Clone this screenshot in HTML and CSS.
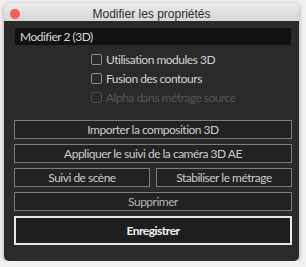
FILE: index.html
```html
<!DOCTYPE html>
<html lang="fr">
<head>
  <meta charset="UTF-8">
  <meta name="viewport" content="width=device-width, initial-scale=1.0">
  <title>Modifier les propriétés</title>
  <link rel="stylesheet" href="styles.css">
</head>
<body>
  <div class="window">
    <div class="title-bar">
      <span class="close-dot"></span>
      <span class="title">Modifier les propriétés</span>
    </div>
    <div class="panel">
      <div class="name-field">Modifier 2 (3D)</div>

      <div class="options">
        <label class="option"><span class="box"></span>Utilisation modules 3D</label>
        <label class="option"><span class="box"></span>Fusion des contours</label>
        <label class="option disabled"><span class="box"></span>Alpha dans métrage source</label>
      </div>

      <div class="actions">
        <button class="btn">Importer la composition 3D</button>
        <button class="btn">Appliquer le suivi de la caméra 3D AE</button>
        <div class="btn-row">
          <button class="btn">Suivi de scène</button>
          <button class="btn">Stabiliser le métrage</button>
        </div>
        <button class="btn dim">Supprimer</button>
        <button class="btn save">Enregistrer</button>
      </div>
    </div>
  </div>
</body>
</html>
```

FILE: styles.css
```css
body {
  margin: 0;
  background: #f1f1f1;
  font-family: "Lato", "Open Sans", sans-serif;
}
.window {
  margin: 3px 7px 0 4px;
  width: 295px;
  height: 258px;
  border-radius: 5px;
  overflow: hidden;
  box-shadow: 0 1px 4px rgba(0, 0, 0, 0.35);
  display: flex;
  flex-direction: column;
}
.title-bar {
  position: relative;
  height: 18px;
  background: linear-gradient(#ececec, #d6d6d6);
  display: flex;
  align-items: center;
  justify-content: center;
}
.close-dot {
  position: absolute;
  left: 6px;
  top: 6px;
  width: 10px;
  height: 10px;
  border-radius: 50%;
  background: #fb5d58;
}
.title {
  font-family: "Liberation Sans", sans-serif;
  font-size: 12px;
  color: #2c2c2c;
  margin-top: 3px;
}
.panel {
  flex: 1;
  background: #2a2a2a;
  padding: 7px 7px 0 10px;
}
.name-field {
  height: 17px;
  margin: 0 1px;
  background: #121212;
  color: #d6d6d6;
  font-size: 12px;
  letter-spacing: -0.5px;
  line-height: 17px;
  padding-left: 5px;
}
.options {
  display: flex;
  flex-direction: column;
  padding: 8px 0 0 77px;
  gap: 6px;
}
.option {
  display: flex;
  align-items: center;
  gap: 4px;
  height: 13px;
  font-size: 12px;
  letter-spacing: -0.5px;
  color: #d2d2d2;
}
.box {
  width: 9px;
  height: 9px;
  border: 1.5px solid #8e8e8e;
  border-radius: 2px;
}
.option.disabled {
  color: #575757;
}
.option.disabled .box {
  border-color: #4a4a4a;
}
.actions {
  display: flex;
  flex-direction: column;
  gap: 5px;
  margin-top: 16px;
}
.btn-row {
  display: flex;
  gap: 6px;
}
.btn-row .btn {
  flex: 1;
}
.btn {
  height: 19px;
  padding: 0;
  background: #222;
  border: 1.5px solid #7c7c7c;
  color: #cccccc;
  font-family: "Lato", "Open Sans", sans-serif;
  font-size: 12px;
  letter-spacing: -0.5px;
}
.btn.dim {
  color: #b4b4b4;
}
.btn.save {
  height: 29px;
  border: 2px solid #e6e6e6;
  background: #1e1e1e;
  color: #f4f4f4;
  font-size: 12px;
  font-weight: bold;
}
```
